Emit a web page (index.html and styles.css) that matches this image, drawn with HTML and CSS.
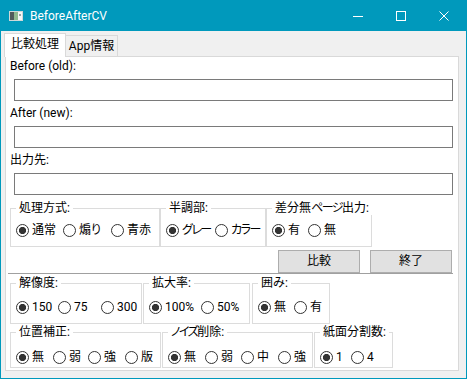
FILE: index.html
```html
<!DOCTYPE html>
<html lang="ja">
<head>
<meta charset="utf-8">
<title>BeforeAfterCV</title>
<link rel="stylesheet" href="styles.css">
</head>
<body>
<div class="window">
  <div class="titlebar">
    <svg class="app-icon" width="14" height="10" viewBox="0 0 14 10">
      <rect x="0" y="0" width="14" height="10" fill="#cfd8d8"/>
      <rect x="1" y="1" width="4" height="8" fill="#4f5b5b"/>
      <rect x="5" y="1" width="4" height="8" fill="#8fb98f"/>
      <rect x="9" y="1" width="4" height="8" fill="#f4f7f7"/>
      <rect x="10" y="3" width="2" height="2" fill="#9aa5a5"/>
    </svg>
    <span class="title">BeforeAfterCV</span>
    <div class="caption-buttons">
      <span class="cap"><svg width="10" height="10" viewBox="0 0 10 10"><line x1="0" y1="5.5" x2="10" y2="5.5" stroke="#fff" stroke-width="1"/></svg></span>
      <span class="cap"><svg width="10" height="10" viewBox="0 0 10 10"><rect x="0.5" y="0.5" width="9" height="9" fill="none" stroke="#fff" stroke-width="1"/></svg></span>
      <span class="cap"><svg width="10" height="10" viewBox="0 0 10 10"><path d="M0.5 0.5 L9.5 9.5 M9.5 0.5 L0.5 9.5" stroke="#fff" stroke-width="1" fill="none"/></svg></span>
    </div>
  </div>
  <div class="client">
    <div class="tabstrip">
      <div class="tab active">比較処理</div>
      <div class="tab other">App情報</div>
    </div>
    <div class="panel">
      <div class="field-label first">Before (old):</div>
      <div class="textbox"></div>
      <div class="field-label">After (new):</div>
      <div class="textbox"></div>
      <div class="field-label">出力先:</div>
      <div class="textbox"></div>

      <div class="group-row row1">
        <fieldset class="group g1">
          <legend>処理方式:</legend>
          <div class="opts">
            <label class="opt"><span class="radio on"></span>通常</label>
            <label class="opt"><span class="radio"></span>煽<span class="kana">り</span></label>
            <label class="opt"><span class="radio"></span>青赤</label>
          </div>
        </fieldset>
        <fieldset class="group g2">
          <legend>半調部:</legend>
          <div class="opts">
            <label class="opt"><span class="radio on"></span><span class="kana">グレー</span></label>
            <label class="opt"><span class="radio"></span><span class="kana">カラー</span></label>
          </div>
        </fieldset>
        <fieldset class="group g3">
          <legend>差分無<span class="kana">ページ</span>出力:</legend>
          <div class="opts">
            <label class="opt"><span class="radio on"></span>有</label>
            <label class="opt"><span class="radio"></span>無</label>
          </div>
        </fieldset>
      </div>

      <div class="button-row">
        <button class="btn">比較</button>
        <button class="btn">終了</button>
      </div>
      <div class="separator"></div>

      <div class="group-row row2">
        <fieldset class="group g4">
          <legend>解像度:</legend>
          <div class="opts">
            <label class="opt"><span class="radio on"></span>150</label>
            <label class="opt"><span class="radio"></span>75</label>
            <label class="opt"><span class="radio"></span>300</label>
          </div>
        </fieldset>
        <fieldset class="group g5">
          <legend>拡大率:</legend>
          <div class="opts">
            <label class="opt"><span class="radio on"></span>100%</label>
            <label class="opt"><span class="radio"></span>50%</label>
          </div>
        </fieldset>
        <fieldset class="group g6">
          <legend>囲み:</legend>
          <div class="opts">
            <label class="opt"><span class="radio on"></span>無</label>
            <label class="opt"><span class="radio"></span>有</label>
          </div>
        </fieldset>
      </div>

      <div class="group-row row3">
        <fieldset class="group g7">
          <legend>位置補正:</legend>
          <div class="opts">
            <label class="opt"><span class="radio on"></span>無</label>
            <label class="opt"><span class="radio"></span>弱</label>
            <label class="opt"><span class="radio"></span>強</label>
            <label class="opt"><span class="radio"></span>版</label>
          </div>
        </fieldset>
        <fieldset class="group g8">
          <legend><span class="kana">ノイズ</span>削除:</legend>
          <div class="opts">
            <label class="opt"><span class="radio on"></span>無</label>
            <label class="opt"><span class="radio"></span>弱</label>
            <label class="opt"><span class="radio"></span>中</label>
            <label class="opt"><span class="radio"></span>強</label>
          </div>
        </fieldset>
        <fieldset class="group g9">
          <legend>紙面分割数:</legend>
          <div class="opts">
            <label class="opt"><span class="radio on"></span>1</label>
            <label class="opt"><span class="radio"></span>4</label>
          </div>
        </fieldset>
      </div>
    </div>
  </div>
</div>
</body>
</html>
```
FILE: styles.css
```css
* { box-sizing: border-box; }

html, body {
  margin: 0;
  padding: 0;
}

body {
  font-family: Roboto, "Noto Sans CJK JP", sans-serif;
  font-size: 12px;
  color: #000;
  background: #fff;
}

.window {
  width: 467px;
  height: 379px;
  border: 1px solid #0099bc;
  background: #f0f0f0;
  display: flex;
  flex-direction: column;
  overflow: hidden;
}

/* title bar */
.titlebar {
  flex: none;
  height: 30px;
  background: #0099bc;
  color: #fff;
  display: flex;
  align-items: center;
}

.app-icon {
  margin-left: 8px;
  flex: none;
}

.title {
  margin-left: 7px;
  line-height: 16px;
}

.caption-buttons {
  margin-left: auto;
  margin-right: 1px;
  display: flex;
  height: 100%;
}

.cap {
  width: 43px;
  display: flex;
  align-items: center;
  justify-content: center;
}

.cap svg { display: block; }

/* client */
.client {
  flex: 1;
  display: flex;
  flex-direction: column;
}

.tabstrip {
  flex: none;
  height: 25px;
  padding-left: 3px;
  display: flex;
  align-items: flex-end;
}

.tab {
  height: 21px;
  border: 1px solid #d9d9d9;
  border-bottom: none;
  background: #f0f0f0;
  line-height: 20px;
  text-align: center;
  white-space: nowrap;
}

.tab.active {
  width: 62px;
  height: 24px;
  margin-bottom: -1px;
  background: #fff;
  position: relative;
  z-index: 1;
}

.tab.other {
  width: 52px;
  border-left: none;
}

.panel {
  flex: none;
  margin-left: 4px;
  width: 454px;
  height: 315px;
  background: #fff;
  border: 1px solid #d9d9d9;
  padding-left: 4px;
  overflow: hidden;
}

.field-label {
  height: 25px;
  line-height: 24px;
  white-space: nowrap;
}

.field-label.first {
  height: 22px;
  line-height: 19px;
}

.textbox {
  margin-left: 4px;
  width: 439px;
  height: 22px;
  border: 1px solid #7a7a7a;
  background: #fff;
}

/* narrow (proportional) kana as in Meiryo UI */
.kana {
  font-feature-settings: "palt" 1;
  letter-spacing: -1.5px;
}

/* group boxes */
.group-row {
  display: flex;
}

.row1 { margin-top: 6px; }
.row2 { margin-top: 2px; }
.row3 { margin-top: 1px; }

.group {
  margin: 0;
  padding: 0 0 0 5px;
  border: 1px solid #dcdcdc;
  min-width: 0;
}

.group legend {
  padding: 0 3px;
  margin: 0;
  line-height: 14px;
  white-space: nowrap;
}

.row1 .group { height: 46px; }
.row1 .opts { padding-top: 7px; }
.row2 .group { height: 48px; }
.row2 .opts { padding-top: 9px; }
.row3 .group { height: 43px; }
.row3 .opts { padding-top: 10px; }

.g1 { width: 150px; }
.g2 { width: 106px; }
.g3 { width: 106px; }
.g4 { width: 132px; }
.g5 { width: 107px; margin-left: 1px; }
.g6 { width: 78px; margin-left: 2px; }
.g7 { width: 151px; }
.g8 { width: 151px; margin-left: 1px; }
.g9 { width: 79px; margin-left: 1px; }

.opts {
  display: grid;
  grid-auto-flow: column;
}

.g1 .opts { grid-template-columns: 47px 48px auto; }
.g2 .opts { grid-template-columns: 49px auto; }
.g3 .opts { grid-template-columns: 36px auto; }
.g4 .opts { grid-template-columns: 42px 43px auto; }
.g5 .opts { grid-template-columns: 52px auto; }
.g6 .opts { grid-template-columns: 36px auto; }
.g7 .opts { grid-template-columns: 37px 35px 37px auto; }
.g8 .opts { grid-template-columns: 37px 36px 37px auto; }
.g9 .opts { grid-template-columns: 31px auto; }

.opt {
  display: flex;
  align-items: center;
  height: 16px;
  line-height: 16px;
  white-space: nowrap;
}

.radio {
  flex: none;
  width: 13px;
  height: 13px;
  margin-right: 3px;
  border: 1px solid #333;
  border-radius: 50%;
  background: #fff;
}

.radio.on {
  background: radial-gradient(circle at center, #333 0, #333 3.3px, #fff 3.9px);
}

/* buttons */
.button-row {
  display: flex;
  justify-content: flex-end;
  gap: 10px;
  margin-top: 3px;
  padding-right: 6px;
}

.btn {
  width: 82px;
  height: 23px;
  padding: 0;
  margin: 0;
  border: 1px solid #adadad;
  background: #e1e1e1;
  font-family: inherit;
  font-size: 12px;
  line-height: 21px;
  color: #000;
}

.separator {
  margin-left: -2px;
  width: 445px;
  height: 1px;
  background: #a0a0a0;
}
```
